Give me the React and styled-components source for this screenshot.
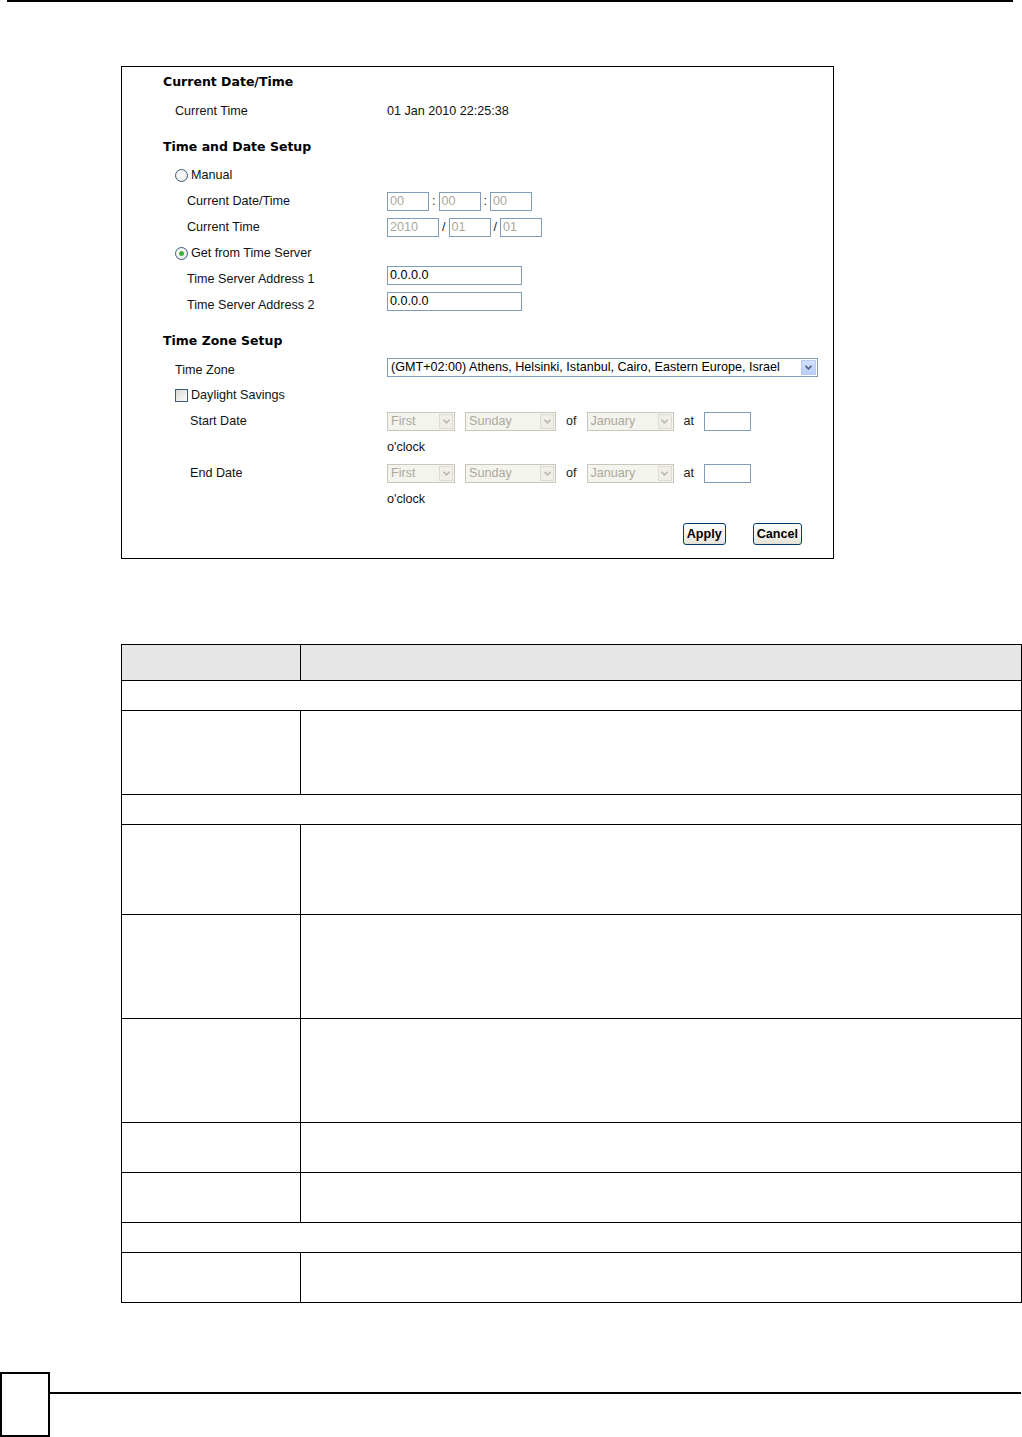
import React from 'react'
import styled, { createGlobalStyle } from 'styled-components'

const GlobalStyle = createGlobalStyle`
  body {
    margin: 0;
    background: #fff;
    font-family: "Liberation Sans", Arial, sans-serif;
  }
`

const Page = styled.div`
  width: 1022px;
  height: 1437px;
  display: flex;
  flex-direction: column;
  box-sizing: border-box;
`

const TopRule = styled.div`
  height: 2px;
  margin: 0 9px 0 7px;
  background: #000;
`

const Panel = styled.section`
  margin: 64px 0 0 121px;
  width: 713px;
  height: 493px;
  box-sizing: border-box;
  border: 1px solid #000;
  padding: 3px 0 0 41px;
  display: flex;
  flex-direction: column;
`

const Heading = styled.h3`
  margin: ${(p) => (p.first ? '0' : '11px')} 0 ${(p) => p.mb ?? 4}px 0;
  height: 24px;
  line-height: 24px;
  font-family: Tahoma, "DejaVu Sans", sans-serif;
  font-size: 12.5px;
  font-weight: bold;
  color: #000;
`

const Row = styled.div`
  display: grid;
  grid-template-columns: 224px 1fr;
  align-items: center;
  height: ${(p) => p.h || 26}px;
  font-size: 12.6px;
  color: #111;
`

const Label = styled.div`
  padding-left: ${(p) => p.indent || 0}px;
  display: flex;
  align-items: center;
  gap: 3px;
`

const Field = styled.div`
  display: flex;
  align-items: center;
  gap: ${(p) => p.gap ?? 3}px;
  margin-bottom: ${(p) => p.lift || 0}px;
`

const TextBox = styled.div`
  width: ${(p) => p.w}px;
  height: 19px;
  box-sizing: border-box;
  border: 1px solid #7f9db9;
  background: #fff;
  padding: 0 2px;
  font-size: 12.6px;
  line-height: 17px;
  color: ${(p) => (p.disabled ? '#aca899' : '#000')};
`

const Sep = styled.span`
  font-size: 12.6px;
  color: #222;
`

const Radio = styled.span`
  width: 11px;
  height: 11px;
  border-radius: 50%;
  border: 1px solid #3a5a80;
  background: radial-gradient(circle at 40% 35%, #fff 0%, #e4e4df 100%);
  display: inline-flex;
  align-items: center;
  justify-content: center;
  &::after {
    content: '';
    width: 5px;
    height: 5px;
    border-radius: 50%;
    background: ${(p) => (p.checked ? '#3bb03b' : 'transparent')};
  }
`

const Check = styled.span`
  width: 11px;
  height: 11px;
  border: 1px solid #3a5a80;
  background: linear-gradient(135deg, #dcdcd5, #fbfbf9);
`

const Combo = styled.div`
  width: ${(p) => p.w}px;
  height: 19px;
  box-sizing: border-box;
  border: 1px solid ${(p) => (p.disabled ? '#c9c7ba' : '#7f9db9')};
  background: ${(p) => (p.disabled ? '#f4f4ef' : '#fff')};
  color: ${(p) => (p.disabled ? '#aca899' : '#000')};
  font-size: 12.6px;
  display: flex;
  align-items: center;
  justify-content: space-between;
  padding-left: 3px;
  padding-right: 1px;
  white-space: nowrap;
`

const ArrowBox = styled.span`
  width: ${(p) => (p.disabled ? 14 : 15)}px;
  height: 15px;
  box-sizing: border-box;
  display: flex;
  align-items: center;
  justify-content: center;
  border: 1px solid ${(p) => (p.disabled ? '#dedcd2' : '#b8cbf3')};
  background: ${(p) =>
    p.disabled ? '#efeee8' : 'linear-gradient(#d4e0fc, #b9cdf8)'};
`

const Chevron = ({ color }) => (
  <svg width="7" height="5" viewBox="0 0 7 5">
    <path d="M0.5 0.8 L3.5 3.8 L6.5 0.8" fill="none" stroke={color} strokeWidth="1.6" />
  </svg>
)

const Select = ({ w, disabled, children }) => (
  <Combo w={w} disabled={disabled}>
    <span>{children}</span>
    <ArrowBox disabled={disabled}>
      <Chevron color={disabled ? '#b9b8ae' : '#4d6185'} />
    </ArrowBox>
  </Combo>
)

const ButtonBar = styled.div`
  display: flex;
  justify-content: flex-end;
  gap: 27px;
  margin-top: 11px;
  padding-right: 31px;
`

const Button = styled.button`
  height: 22px;
  padding: 0 3px;
  border: 1px solid #003c74;
  border-radius: 3px;
  background: linear-gradient(#fff, #f3f2ec 60%, #e3e1d6);
  font-family: "Liberation Sans", Arial, sans-serif;
  font-size: 12.6px;
  font-weight: bold;
  color: #000;
`

const Table = styled.table`
  margin: 85px 0 0 121px;
  width: 901px;
  border-collapse: collapse;
  border: 1px solid #000;
`

const Cell = styled.td`
  border: 1px solid #000;
  padding: 0;
  height: ${(p) => p.h - 1}px;
  background: ${(p) => (p.head ? '#e6e6e6' : '#fff')};
  width: ${(p) => (p.first ? '178px' : 'auto')};
`

const Footer = styled.div`
  margin-top: auto;
  display: flex;
  align-items: flex-start;
`

const PageBox = styled.div`
  width: 50px;
  height: 65px;
  box-sizing: border-box;
  border: 2px solid #000;
`

const FooterRule = styled.div`
  flex: 1;
  margin: 20px 1px 0 0;
  height: 1.5px;
  background: #000;
`

const tableRows = [
  { h: 36, head: true },
  { h: 30, span: true },
  { h: 84 },
  { h: 30, span: true },
  { h: 90 },
  { h: 104 },
  { h: 104 },
  { h: 50 },
  { h: 50 },
  { h: 30, span: true },
  { h: 50 },
]

function DaylightRow({ label }) {
  return (
    <>
      <Row>
        <Label indent={27}>{label}</Label>
        <Field gap={10}>
          <Select w={68} disabled>First</Select>
          <Select w={91} disabled>Sunday</Select>
          <Sep>of</Sep>
          <Select w={87} disabled>January</Select>
          <Sep>at</Sep>
          <TextBox w={47} />
        </Field>
      </Row>
      <Row>
        <Label />
        <Field>o'clock</Field>
      </Row>
    </>
  )
}

export default function App() {
  return (
    <Page>
      <GlobalStyle />
      <TopRule />
      <Panel>
        <Heading first>Current Date/Time</Heading>
        <Row>
          <Label indent={12}>Current Time</Label>
          <Field>01 Jan 2010 22:25:38</Field>
        </Row>

        <Heading mb={3}>Time and Date Setup</Heading>
        <Row>
          <Label indent={12}>
            <Radio />
            Manual
          </Label>
        </Row>
        <Row>
          <Label indent={24}>Current Date/Time</Label>
          <Field>
            <TextBox w={42} disabled>00</TextBox>
            <Sep>:</Sep>
            <TextBox w={42} disabled>00</TextBox>
            <Sep>:</Sep>
            <TextBox w={42} disabled>00</TextBox>
          </Field>
        </Row>
        <Row>
          <Label indent={24}>Current Time</Label>
          <Field>
            <TextBox w={52} disabled>2010</TextBox>
            <Sep>/</Sep>
            <TextBox w={42} disabled>01</TextBox>
            <Sep>/</Sep>
            <TextBox w={42} disabled>01</TextBox>
          </Field>
        </Row>
        <Row>
          <Label indent={12}>
            <Radio checked />
            Get from Time Server
          </Label>
        </Row>
        <Row>
          <Label indent={24}>Time Server Address 1</Label>
          <Field lift={7}>
            <TextBox w={135}>0.0.0.0</TextBox>
          </Field>
        </Row>
        <Row>
          <Label indent={24}>Time Server Address 2</Label>
          <Field lift={7}>
            <TextBox w={135}>0.0.0.0</TextBox>
          </Field>
        </Row>

        <Heading>Time Zone Setup</Heading>
        <Row h={25}>
          <Label indent={12}>Time Zone</Label>
          <Field lift={5}>
            <Select w={431}>(GMT+02:00) Athens, Helsinki, Istanbul, Cairo, Eastern Europe, Israel</Select>
          </Field>
        </Row>
        <Row>
          <Label indent={12}>
            <Check />
            Daylight Savings
          </Label>
        </Row>
        <DaylightRow label="Start Date" />
        <DaylightRow label="End Date" />

        <ButtonBar>
          <Button>Apply</Button>
          <Button>Cancel</Button>
        </ButtonBar>
      </Panel>

      <Table>
        <tbody>
          {tableRows.map((r, i) =>
            r.span ? (
              <tr key={i}>
                <Cell h={r.h} colSpan={2} />
              </tr>
            ) : (
              <tr key={i}>
                <Cell h={r.h} head={r.head} first />
                <Cell h={r.h} head={r.head} />
              </tr>
            )
          )}
        </tbody>
      </Table>

      <Footer>
        <PageBox />
        <FooterRule />
      </Footer>
    </Page>
  )
}
